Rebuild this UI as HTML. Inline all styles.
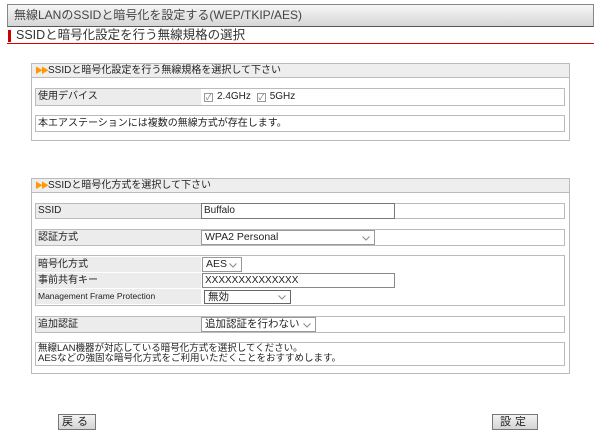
<!DOCTYPE html>
<html><head><meta charset="utf-8"><style>
*{box-sizing:border-box;margin:0;padding:0}
body{width:600px;height:437px;background:#fff;position:relative;font-family:"Liberation Sans","Noto Sans CJK JP",sans-serif;font-size:10px;color:#222;overflow:hidden}
.a{position:absolute}
.title{left:7px;top:4px;width:587px;height:23px;background:linear-gradient(#f6f6f6,#d6d6d6);border:1px solid #888;border-bottom-color:#555;font-size:12px;line-height:21px;padding-left:6px;color:#444}
.sub{left:16px;top:28px;font-size:12.5px;line-height:15px;color:#333}
.mark{left:8px;top:30px;width:3px;height:12px;background:#c00}
.red{left:7px;top:43px;width:587px;height:1px;background:#d00}
.box{border:1px solid #bbb;left:31px;width:539px}
.hd{left:31px;width:539px;height:15px;background:#eee;border:1px solid #bbb;line-height:14px;padding-left:16px;font-size:10px}
.hd i{position:absolute;left:3px;top:3px;width:10px;height:7px;color:#f90;font-style:normal;font-size:8px;line-height:7px;letter-spacing:-2px}
.row{left:35px;width:530px;border:1px solid #bbb;background:#fff}
.lab{position:absolute;left:0;top:0;bottom:0;width:165px;background:#ececec;padding-left:2px}
.inp{position:absolute;border:1px solid #777;background:#fff;padding-left:2px;font-size:10px}
.sel{position:absolute;border:1px solid #999;background:#fff;padding-left:3px;font-size:10.5px}
.sel svg{position:absolute;right:4px;top:50%;margin-top:-2px}
.btn{height:16px;border:1px solid #777;background:linear-gradient(#f2f2f2,#d4d4d4);font-size:11px;text-align:center;line-height:14px;letter-spacing:4px}
.cb{display:inline-block;width:9px;height:9px;border:1px solid #999;font-size:8px;line-height:7px;text-align:center;color:#777;vertical-align:-1px;margin-right:4px}
</style></head><body>
<div class="a title">無線LANのSSIDと暗号化を設定する(WEP/TKIP/AES)</div>
<div class="a mark"></div>
<div class="a sub">SSIDと暗号化設定を行う無線規格の選択</div>
<div class="a red"></div>

<div class="a box" style="top:63px;height:78px"></div>
<div class="a hd" style="top:63px"><i>▶▶</i>SSIDと暗号化設定を行う無線規格を選択して下さい</div>
<div class="a row" style="top:88px;height:18px;line-height:16px"><div class="lab">使用デバイス</div><div class="a" style="left:168px;top:0"><span class="cb">✓</span>2.4GHz <span class="cb" style="margin-left:3px">✓</span>5GHz</div></div>
<div class="a row" style="top:115px;height:17px;line-height:15px;padding-left:2px">本エアステーションには複数の無線方式が存在します。</div>

<div class="a box" style="top:178px;height:196px"></div>
<div class="a hd" style="top:178px"><i>▶▶</i>SSIDと暗号化方式を選択して下さい</div>
<div class="a row" style="top:203px;height:16px;line-height:14px"><div class="lab">SSID</div><div class="inp" style="left:165px;top:-1px;width:194px;height:16px;line-height:14px">Buffalo</div></div>
<div class="a row" style="top:229px;height:17px;line-height:15px"><div class="lab">認証方式</div><div class="sel" style="left:165px;top:0;width:174px;height:15px;line-height:13px">WPA2 Personal<svg width="8" height="5"><path d="M0.5 0.5L4 4L7.5 0.5" fill="none" stroke="#888"/></svg></div></div>
<div class="a row" style="top:255px;height:51px">
 <div class="lab" style="height:15px;bottom:auto;top:1px;line-height:15px">暗号化方式</div>
 <div class="sel" style="left:166px;top:1px;width:40px;height:15px;line-height:13px">AES<svg width="8" height="5"><path d="M0.5 0.5L4 4L7.5 0.5" fill="none" stroke="#888"/></svg></div>
 <div class="lab" style="height:15px;bottom:auto;top:17px;line-height:15px">事前共有キー</div>
 <div class="inp" style="left:166px;top:17px;width:193px;height:15px;line-height:13px;border-color:#888">XXXXXXXXXXXXXX</div>
 <div class="lab" style="height:15px;bottom:auto;top:33px;line-height:15px;font-size:8.5px">Management Frame Protection</div>
 <div class="sel" style="left:168px;top:34px;width:87px;height:14px;line-height:12px;border-color:#666">無効<svg width="8" height="5"><path d="M0.5 0.5L4 4L7.5 0.5" fill="none" stroke="#888"/></svg></div>
</div>
<div class="a row" style="top:316px;height:17px;line-height:15px"><div class="lab">追加認証</div><div class="sel" style="left:165px;top:0;width:115px;height:15px;line-height:13px;font-size:10.5px">追加認証を行わない<svg width="8" height="5"><path d="M0.5 0.5L4 4L7.5 0.5" fill="none" stroke="#888"/></svg></div></div>
<div class="a row" style="top:342px;height:24px;line-height:10px;padding-left:2px;padding-top:1px;font-size:9.5px">無線LAN機器が対応している暗号化方式を選択してください。<br>AESなどの強固な暗号化方式をご利用いただくことをおすすめします。</div>

<div class="a btn" style="left:58px;top:414px;width:38px">戻る</div>
<div class="a btn" style="left:492px;top:414px;width:46px">設定</div>
</body></html>
